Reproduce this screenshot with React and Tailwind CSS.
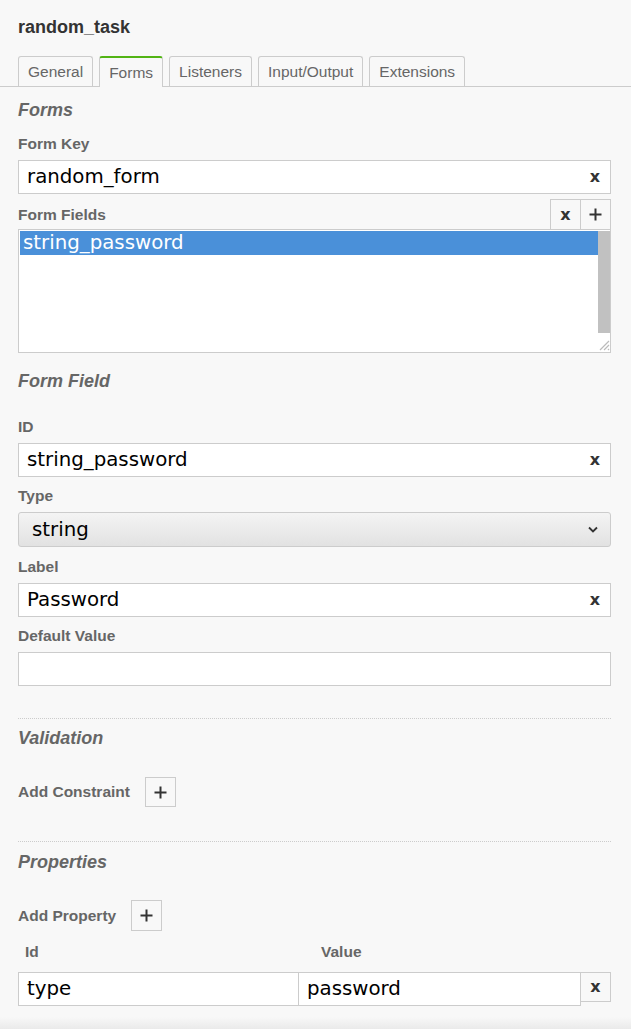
const sans = { fontFamily: '"Liberation Sans", Arial, sans-serif' }

function ClearIcon() {
  return (
    <span className="font-['DejaVu_Sans'] text-[16px] font-bold leading-none text-[#333]">x</span>
  )
}

function PlusIcon() {
  return (
    <svg width="13" height="13" viewBox="0 0 13 13" className="text-[#333]">
      <path d="M6.5 0.5v12M0.5 6.5h12" stroke="currentColor" strokeWidth="2" />
    </svg>
  )
}

function Label({ children, className = '' }) {
  return (
    <div className={`font-['Liberation_Sans'] text-[15.5px] font-bold leading-[18px] text-[#666] ${className}`}>
      {children}
    </div>
  )
}

function Heading({ children, className = '' }) {
  return (
    <div className={`font-['Liberation_Sans'] text-[18px] font-bold italic leading-[22px] text-[#666] ${className}`}>
      {children}
    </div>
  )
}

function TextInput({ value, clear = true, className = '' }) {
  return (
    <div className={`flex h-[34px] items-center border border-[#ccc] bg-white pl-[8px] pr-[10px] ${className}`}>
      <span className="flex-1 font-['DejaVu_Sans'] text-[19.8px] leading-none text-black">{value}</span>
      {clear && <ClearIcon />}
    </div>
  )
}

function SmallButton({ children, className = '' }) {
  return (
    <div className={`flex h-[30px] w-[31px] items-center justify-center border border-[#ccc] bg-[#f8f8f8] ${className}`}>
      {children}
    </div>
  )
}

const tabs = ['General', 'Forms', 'Listeners', 'Input/Output', 'Extensions']

export default function App() {
  return (
    <div className="flex min-h-[1029px] w-full flex-col bg-[#f8f8f8]" style={sans}>
      <div className="px-[18px] pt-[16px] font-['Liberation_Sans'] text-[18px] font-bold leading-[22px] text-[#333]">
        random_task
      </div>

      <div className="mt-[18px] flex h-[31px] items-end gap-[6px] border-b border-[#ccc] pl-[18px]">
        {tabs.map((tab) => (
          <div
            key={tab}
            className={
              tab === 'Forms'
                ? 'relative -mb-px flex h-[31px] items-center rounded-t-[3px] border border-b-0 border-[#ccc] border-t-2 border-t-[#52b415] bg-[#f8f8f8] px-[9px] text-[15.5px] text-[#666]'
                : 'flex h-[30px] items-center rounded-t-[3px] border border-b-0 border-[#ccc] bg-[#f8f8f8] px-[9px] text-[15.5px] text-[#666]'
            }
          >
            {tab}
          </div>
        ))}
      </div>

      <div className="flex flex-col pl-[18px] pr-[20px]">
        <Heading className="mt-[12px]">Forms</Heading>
        <Label className="mt-[14px]">Form Key</Label>
        <TextInput value="random_form" className="mt-[7px]" />

        <div className="mt-[5px] flex items-center justify-between">
          <Label className="mt-[1px]">Form Fields</Label>
          <div className="flex">
            <SmallButton className="border-b-0">
              <ClearIcon />
            </SmallButton>
            <SmallButton className="-ml-px border-b-0">
              <PlusIcon />
            </SmallButton>
          </div>
        </div>

        <div className="flex h-[124px] border border-[#ccc] bg-white pt-px pl-px">
          <div className="flex-1">
            <div className="flex h-[24px] items-center bg-[#4a90d9] pl-[3px] font-['DejaVu_Sans'] text-[19.8px] leading-none text-white">
              string_password
            </div>
          </div>
          <div className="flex w-[12px] flex-col">
            <div className="h-[102px] bg-[#c1c1c1]" />
            <div className="mt-auto mb-px">
              <svg width="12" height="14" viewBox="0 0 12 14">
                <path d="M2 13L11 4M6 13L11 8M10 13L11 12" stroke="#bbb" strokeWidth="1.2" />
              </svg>
            </div>
          </div>
        </div>

        <Heading className="mt-[17px]">Form Field</Heading>
        <Label className="mt-[26px]">ID</Label>
        <TextInput value="string_password" className="mt-[7px]" />

        <Label className="mt-[10px]">Type</Label>
        <div className="mt-[7px] flex h-[35px] items-center rounded-[3px] border border-[#ccc] bg-gradient-to-b from-[#f4f4f4] to-[#e2e2e2] pl-[13px] pr-[12px]">
          <span className="flex-1 font-['DejaVu_Sans'] text-[19.8px] leading-none text-black">string</span>
          <svg width="10" height="7" viewBox="0 0 10 7">
            <path d="M1 1.5L5 5.5L9 1.5" fill="none" stroke="#333" strokeWidth="1.8" />
          </svg>
        </div>

        <Label className="mt-[11px]">Label</Label>
        <TextInput value="Password" className="mt-[7px]" />

        <Label className="mt-[10px]">Default Value</Label>
        <TextInput value="" clear={false} className="mt-[7px]" />

        <div className="mt-[32px] border-t border-dotted border-[#ccc]" />
        <Heading className="mt-[8px]">Validation</Heading>

        <div className="mt-[28px] flex items-center gap-[15px]">
          <Label>Add Constraint</Label>
          <SmallButton className="h-[30px] w-[31px]">
            <PlusIcon />
          </SmallButton>
        </div>

        <div className="mt-[34px] border-t border-dotted border-[#ccc]" />
        <Heading className="mt-[9px]">Properties</Heading>

        <div className="mt-[27px] flex items-center gap-[15px]">
          <Label>Add Property</Label>
          <SmallButton className="h-[31px] w-[31px]">
            <PlusIcon />
          </SmallButton>
        </div>

        <div className="mt-[12px] flex">
          <Label className="w-[303px] pl-[7px]">Id</Label>
          <Label>Value</Label>
        </div>

        <div className="mt-[11px] flex items-start">
          <TextInput value="type" clear={false} className="w-[281px]" />
          <TextInput value="password" clear={false} className="-ml-px w-[283px]" />
          <SmallButton className="-ml-px h-[30px] w-[31px]">
            <ClearIcon />
          </SmallButton>
        </div>
      </div>

      <div className="mt-auto h-[12px] bg-gradient-to-b from-[#f8f8f8] to-[#eaeaea]" />
    </div>
  )
}
